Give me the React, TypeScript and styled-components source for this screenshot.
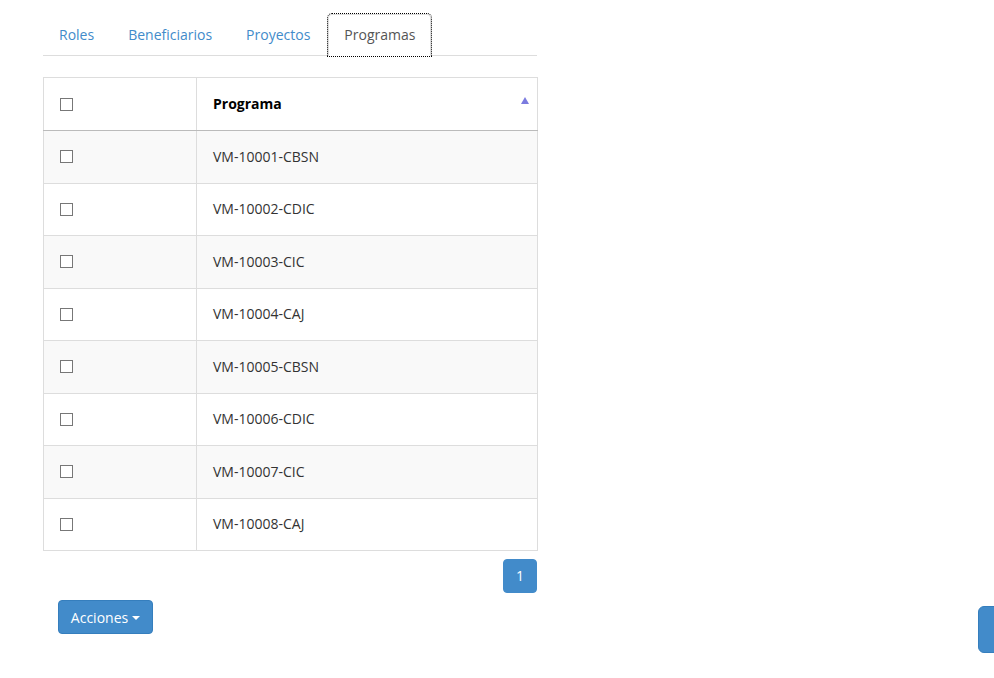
import React from "react";
import styled, { createGlobalStyle } from "styled-components";

const Global = createGlobalStyle`
  html, body { margin: 0; padding: 0; background: #fff; }
  body { font-family: "Open Sans", "Liberation Sans", sans-serif; font-size: 14px; color: #333; }
  * { box-sizing: border-box; }
`;

const Page = styled.div`
  width: 994px;
  height: 678px;
  padding: 14px 0 0 43px;
  position: relative;
  overflow: hidden;
`;

const Panel = styled.div`
  width: 495px;
`;

const Tabs = styled.ul`
  display: flex;
  list-style: none;
  margin: 0;
  padding: 0;
  border-bottom: 1px solid #ddd;
  height: 42px;
  width: 494px;
`;

const Tab = styled.li<{ $active?: boolean }>`
  margin-right: 2px;
  margin-bottom: -1px;
  a {
    display: block;
    padding: 10px 15px;
    line-height: 20px;
    height: 42px;
    border: 1px solid ${(p) => (p.$active ? "#ddd" : "transparent")};
    border-bottom-color: ${(p) => (p.$active ? "#fff" : "transparent")};
    border-radius: 4px 4px 0 0;
    background: ${(p) => (p.$active ? "#fff" : "transparent")};
    color: ${(p) => (p.$active ? "#555" : "#428bca")};
    text-decoration: none;
    outline: ${(p) => (p.$active ? "1px dotted #000" : "none")};
    outline-offset: 0;
  }
`;

const Table = styled.table`
  margin-top: 21px;
  width: 495px;
  border-collapse: collapse;
  border: 1px solid #ddd;
`;

const Th = styled.th<{ $w?: number }>`
  text-align: left;
  font-weight: 700;
  color: #000;
  padding: 0 16px;
  height: 53px;
  line-height: 20px;
  border: 1px solid #ddd;
  border-bottom: 1px solid #bbb;
  position: relative;
  width: ${(p) => (p.$w ? `${p.$w}px` : "auto")};
  vertical-align: middle;
`;

const Tr = styled.tr<{ $odd: boolean }>`
  background: ${(p) => (p.$odd ? "#f9f9f9" : "#fff")};
`;

const Td = styled.td`
  padding: 0 16px;
  height: 52.5px;
  line-height: 20px;
  border: 1px solid #ddd;
  vertical-align: middle;
`;

const Check = styled.span`
  display: block;
  width: 13px;
  height: 13px;
  border: 1px solid #777;
  background: #fff;
`;

const SortArrow = styled.span`
  position: absolute;
  right: 8px;
  top: 19px;
  width: 0;
  height: 0;
  border-left: 4px solid transparent;
  border-right: 4px solid transparent;
  border-bottom: 7px solid #7b7bdf;
`;

const Pager = styled.div`
  display: flex;
  justify-content: flex-end;
  margin-top: 8px;
  width: 494px;
`;

const PageBtn = styled.span`
  display: block;
  width: 34px;
  height: 34px;
  line-height: 32px;
  text-align: center;
  color: #fff;
  background: #428bca;
  border: 1px solid #428bca;
  border-radius: 4px;
`;

const ActionBtn = styled.button`
  margin: 7px 0 0 15px;
  height: 34px;
  width: 95px;
  padding: 0 12px;
  font-family: inherit;
  font-size: 14px;
  color: #fff;
  background: #428bca;
  border: 1px solid #357ebd;
  border-radius: 4px;
  display: flex;
  align-items: center;
  justify-content: center;
  gap: 4px;
`;

const Caret = styled.span`
  display: inline-block;
  width: 0;
  height: 0;
  border-left: 4px solid transparent;
  border-right: 4px solid transparent;
  border-top: 4px solid #fff;
  margin-top: 2px;
`;

const SideTab = styled.div`
  position: absolute;
  left: 978px;
  top: 606px;
  width: 24px;
  height: 47px;
  background: #428bca;
  border: 1px solid #357ebd;
  border-radius: 6px;
`;

const rows = [
  "VM-10001-CBSN",
  "VM-10002-CDIC",
  "VM-10003-CIC",
  "VM-10004-CAJ",
  "VM-10005-CBSN",
  "VM-10006-CDIC",
  "VM-10007-CIC",
  "VM-10008-CAJ",
];

export default function App() {
  return (
    <Page>
      <Global />
      <Panel>
        <Tabs>
          <Tab><a href="#">Roles</a></Tab>
          <Tab><a href="#">Beneficiarios</a></Tab>
          <Tab><a href="#">Proyectos</a></Tab>
          <Tab $active><a href="#">Programas</a></Tab>
        </Tabs>
        <Table>
          <thead>
            <tr>
              <Th $w={153}><Check /></Th>
              <Th>
                Programa
                <SortArrow />
              </Th>
            </tr>
          </thead>
          <tbody>
            {rows.map((r, i) => (
              <Tr key={r} $odd={i % 2 === 0}>
                <Td><Check /></Td>
                <Td>{r}</Td>
              </Tr>
            ))}
          </tbody>
        </Table>
        <Pager>
          <PageBtn>1</PageBtn>
        </Pager>
        <ActionBtn>
          Acciones <Caret />
        </ActionBtn>
      </Panel>
      <SideTab />
    </Page>
  );
}
